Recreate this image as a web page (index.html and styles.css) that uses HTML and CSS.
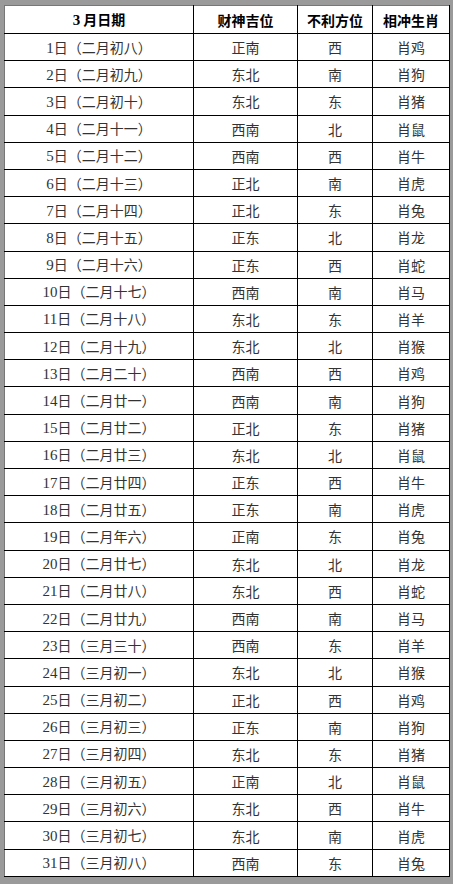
FILE: index.html
```html
<!DOCTYPE html>
<html lang="zh-CN">
<head>
<meta charset="utf-8">
<title>3月日期</title>
<link rel="stylesheet" href="styles.css">
</head>
<body>
<div class="frame">
<table class="cal">
<colgroup><col class="c1"><col class="c2"><col class="c3"><col class="c4"></colgroup>
<thead>
<tr><th><span class="num">3</span> 月日期</th><th>财神吉位</th><th>不利方位</th><th>相冲生肖</th></tr>
</thead>
<tbody>
<tr><td><span class="num">1</span>日（二月初八）</td><td>正南</td><td>西</td><td>肖鸡</td></tr>
<tr><td><span class="num">2</span>日（二月初九）</td><td>东北</td><td>南</td><td>肖狗</td></tr>
<tr><td><span class="num">3</span>日（二月初十）</td><td>东北</td><td>东</td><td>肖猪</td></tr>
<tr><td><span class="num">4</span>日（二月十一）</td><td>西南</td><td>北</td><td>肖鼠</td></tr>
<tr><td><span class="num">5</span>日（二月十二）</td><td>西南</td><td>西</td><td>肖牛</td></tr>
<tr><td><span class="num">6</span>日（二月十三）</td><td>正北</td><td>南</td><td>肖虎</td></tr>
<tr><td><span class="num">7</span>日（二月十四）</td><td>正北</td><td>东</td><td>肖兔</td></tr>
<tr><td><span class="num">8</span>日（二月十五）</td><td>正东</td><td>北</td><td>肖龙</td></tr>
<tr><td><span class="num">9</span>日（二月十六）</td><td>正东</td><td>西</td><td>肖蛇</td></tr>
<tr><td><span class="num">10</span>日（二月十七）</td><td>西南</td><td>南</td><td>肖马</td></tr>
<tr><td><span class="num">11</span>日（二月十八）</td><td>东北</td><td>东</td><td>肖羊</td></tr>
<tr><td><span class="num">12</span>日（二月十九）</td><td>东北</td><td>北</td><td>肖猴</td></tr>
<tr><td><span class="num">13</span>日（二月二十）</td><td>西南</td><td>西</td><td>肖鸡</td></tr>
<tr><td><span class="num">14</span>日（二月廿一）</td><td>西南</td><td>南</td><td>肖狗</td></tr>
<tr><td><span class="num">15</span>日（二月廿二）</td><td>正北</td><td>东</td><td>肖猪</td></tr>
<tr><td><span class="num">16</span>日（二月廿三）</td><td>东北</td><td>北</td><td>肖鼠</td></tr>
<tr><td><span class="num">17</span>日（二月廿四）</td><td>正东</td><td>西</td><td>肖牛</td></tr>
<tr><td><span class="num">18</span>日（二月廿五）</td><td>正东</td><td>南</td><td>肖虎</td></tr>
<tr><td><span class="num">19</span>日（二月年六）</td><td>正南</td><td>东</td><td>肖兔</td></tr>
<tr><td><span class="num">20</span>日（二月廿七）</td><td>东北</td><td>北</td><td>肖龙</td></tr>
<tr><td><span class="num">21</span>日（二月廿八）</td><td>东北</td><td>西</td><td>肖蛇</td></tr>
<tr><td><span class="num">22</span>日（二月廿九）</td><td>西南</td><td>南</td><td>肖马</td></tr>
<tr><td><span class="num">23</span>日（三月三十）</td><td>西南</td><td>东</td><td>肖羊</td></tr>
<tr><td><span class="num">24</span>日（三月初一）</td><td>东北</td><td>北</td><td>肖猴</td></tr>
<tr><td><span class="num">25</span>日（三月初二）</td><td>正北</td><td>西</td><td>肖鸡</td></tr>
<tr><td><span class="num">26</span>日（三月初三）</td><td>正东</td><td>南</td><td>肖狗</td></tr>
<tr><td><span class="num">27</span>日（三月初四）</td><td>东北</td><td>东</td><td>肖猪</td></tr>
<tr><td><span class="num">28</span>日（三月初五）</td><td>正南</td><td>北</td><td>肖鼠</td></tr>
<tr><td><span class="num">29</span>日（三月初六）</td><td>东北</td><td>西</td><td>肖牛</td></tr>
<tr><td><span class="num">30</span>日（三月初七）</td><td>东北</td><td>南</td><td>肖虎</td></tr>
<tr><td><span class="num">31</span>日（三月初八）</td><td>西南</td><td>东</td><td>肖兔</td></tr>
</tbody>
</table>
</div>
</body>
</html>
```

FILE: styles.css
```css
html, body {
  margin: 0;
  padding: 0;
  background: #9a9a9a;
}
.frame {
  padding: 5px 4px 6px 4px;
  width: 445px;
}
.cal {
  border-collapse: collapse;
  table-layout: fixed;
  width: 445px;
  background: #fff;
  border-top: 1px solid #777;
  border-left: 1px solid #777;
  border-right: 1px solid #000;
  border-bottom: 1px solid #000;
  font-family: "Noto Sans CJK SC", sans-serif;
  font-size: 14px;
  color: #333;
}
.c1 { width: 189px; }
.c2 { width: 104px; }
.c3 { width: 75px; }
.c4 { width: 77px; }
.cal th, .cal td {
  border: 1px solid #000;
  text-align: center;
  padding: 0;
  line-height: 16px;
}
.cal thead tr { height: 28px; }
.cal tbody tr { height: 27.2px; }
.cal th {
  font-weight: bold;
  color: #000;
  font-size: 14px;
}
.cal thead th { border-top-color: #777; }
.cal tr > :first-child { border-left-color: #777; }
.num {
  font-family: "Liberation Serif", serif;
  font-size: 15px;
}
```
